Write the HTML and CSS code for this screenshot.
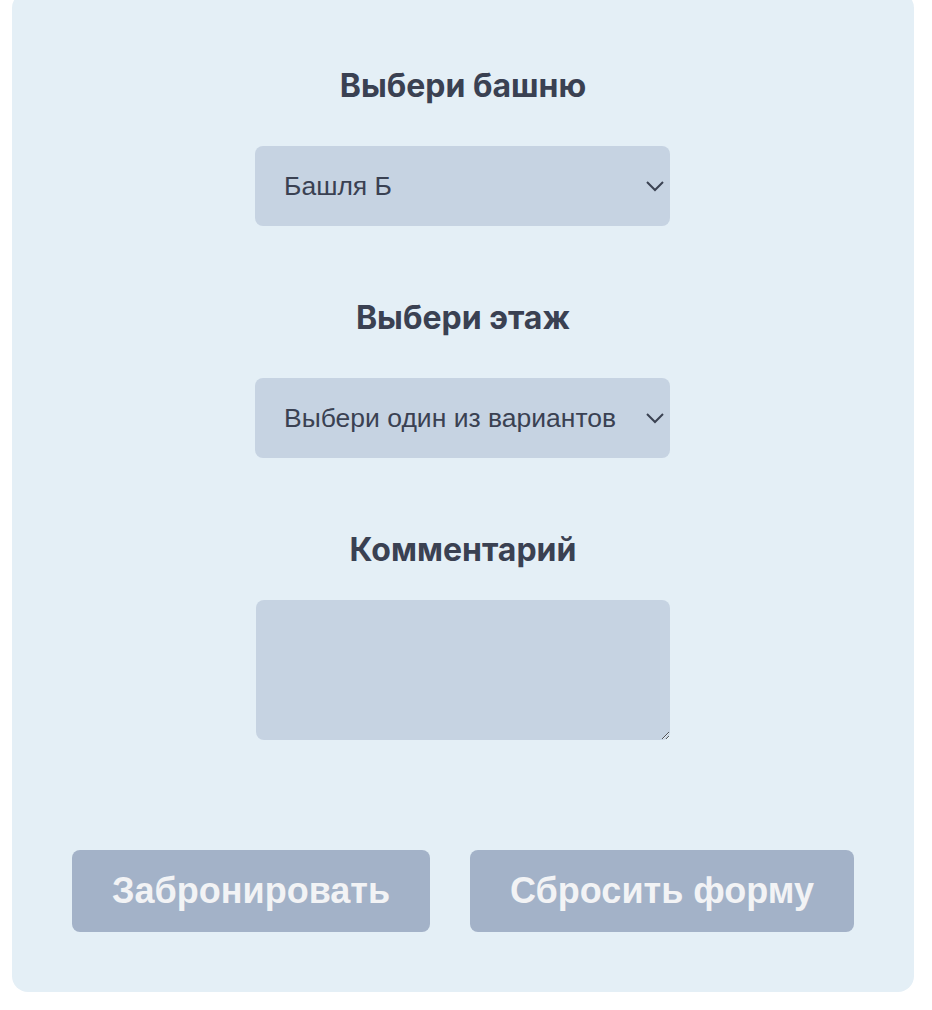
FILE: index.html
```html
<!DOCTYPE html>
<html lang="ru">
<head>
<meta charset="utf-8">
<link rel="stylesheet" href="styles.css">
</head>
<body>
<form class="card">
  <div class="field">
    <label class="label" for="tower">Выбери башню</label>
    <div class="select-wrap">
      <select id="tower" class="select">
        <option>Башля Б</option>
      </select>
      <svg class="chevron" width="20" height="12" viewBox="0 0 20 12"><path d="M2 2 L10 10 L18 2" fill="none" stroke="#3b4252" stroke-width="2"/></svg>
    </div>
  </div>
  <div class="field">
    <label class="label" for="floor">Выбери этаж</label>
    <div class="select-wrap">
      <select id="floor" class="select">
        <option>Выбери один из вариантов</option>
      </select>
      <svg class="chevron" width="20" height="12" viewBox="0 0 20 12"><path d="M2 2 L10 10 L18 2" fill="none" stroke="#3b4252" stroke-width="2"/></svg>
    </div>
  </div>
  <div class="field field-last">
    <label class="label" for="comment">Комментарий</label>
    <textarea id="comment" class="textarea"></textarea>
  </div>
  <div class="actions">
    <button type="button" class="btn">Забронировать</button>
    <button type="reset" class="btn">Сбросить форму</button>
  </div>
</form>
</body>
</html>
```
FILE: styles.css
```css
html, body {
  margin: 0;
  padding: 0;
  background: #ffffff;
}
.card {
  box-sizing: border-box;
  width: 902px;
  margin: -8px 0 18px 12px;
  background: #e4eff6;
  border-radius: 16px;
  padding: 77px 0 60px;
  display: flex;
  flex-direction: column;
  align-items: center;
}
.field {
  display: flex;
  flex-direction: column;
  align-items: center;
  margin-bottom: 75px;
}
.field-last {
  margin-bottom: 110px;
}
.label {
  font-family: Inter, "Noto Sans", sans-serif;
  font-weight: 700;
  font-size: 32px;
  line-height: 34px;
  color: #3a4152;
  margin-bottom: 43px;
}
.field-last .label {
  margin-bottom: 33px;
}
.select-wrap {
  position: relative;
  width: 415px;
  height: 80px;
  margin-right: 1px;
}
.select {
  appearance: none;
  -webkit-appearance: none;
  box-sizing: border-box;
  width: 100%;
  height: 100%;
  border: none;
  border-radius: 8px;
  background: #c6d3e2;
  padding: 0 50px 0 29px;
  font-family: "Liberation Sans", Arial, sans-serif;
  font-size: 26.5px;
  color: #3a4152;
  outline: none;
}
.chevron {
  position: absolute;
  right: 5px;
  top: 34px;
  pointer-events: none;
}
.textarea {
  box-sizing: border-box;
  width: 414px;
  height: 140px;
  border: none;
  border-radius: 8px;
  background: #c6d3e2;
  outline: none;
  font-family: "Liberation Sans", Arial, sans-serif;
  font-size: 20px;
  display: block;
}
.actions {
  display: flex;
  gap: 40px;
  justify-content: center;
}
.btn {
  height: 82px;
  padding: 0 40px;
  border: none;
  border-radius: 8px;
  background: #a3b2c8;
  color: #f2f3f5;
  font-family: "Liberation Sans", Arial, sans-serif;
  font-weight: 700;
  font-size: 36px;
  cursor: pointer;
}
```
